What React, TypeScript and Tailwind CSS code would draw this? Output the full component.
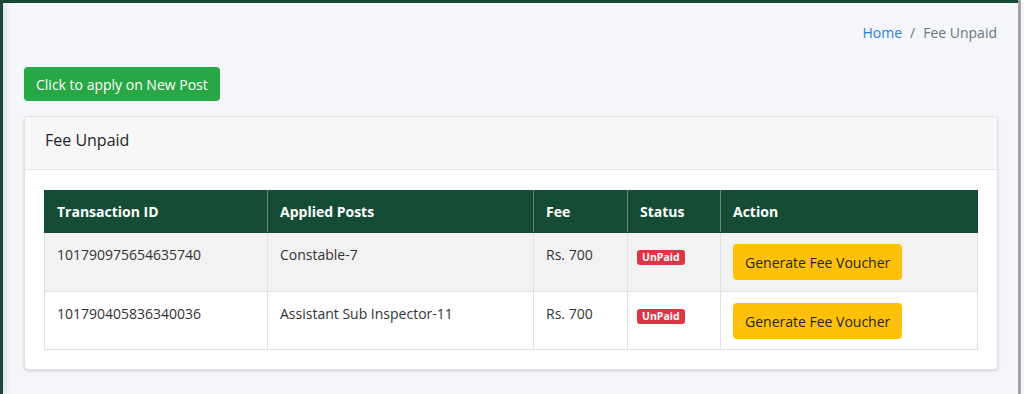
const rows = [
  { id: "101790975654635740", post: "Constable-7", fee: "Rs. 700" },
  { id: "101790405836340036", post: "Assistant Sub Inspector-11", fee: "Rs. 700" },
];

export default function App() {
  return (
    <div className="flex h-[394px] w-[1024px] overflow-hidden bg-[#f4f6f9] font-['Open_Sans',sans-serif] text-[#212529]">
      <div className="w-[3px] shrink-0 bg-[#164a34] shadow-[2px_0_6px_rgba(0,0,0,0.18)] z-10" />

      <div className="flex flex-1 flex-col">
        <div className="h-[3px] bg-[#164a34]" />

        <main className="flex flex-col pl-[21px] pr-5 pt-[19px]">
          <nav className="flex justify-end items-center gap-2 text-[14px] leading-[21px] pr-[1px]">
            <span className="text-[#2d7fd6]">Home</span>
            <span className="text-[#6c757d]">/</span>
            <span className="text-[#6c757d]">Fee Unpaid</span>
          </nav>

          <div className="mt-[24px]">
            <button className="h-[34px] rounded-[4px] bg-[#28a745] px-3 text-[14px] text-white">
              Click to apply on New Post
            </button>
          </div>

          <section className="mt-[15px] rounded-[4px] border border-[#e2e2e2] bg-white shadow-[0_1px_3px_rgba(0,0,0,0.15)]">
            <header className="h-[53px] flex items-start pt-[11px] border-b border-[#e5e5e5] bg-[#f7f7f7] px-5 rounded-t-[4px]">
              <h3 className="text-[16px] leading-[24px] text-[#212529]">Fee Unpaid</h3>
            </header>

            <div className="px-[19px] pt-5 pb-[19px]">
              <table className="w-full border-collapse text-[14px]">
                <thead>
                  <tr className="h-[42px] bg-[#154c35] text-left text-white">
                    <th className="w-[223px] border border-[#154c35] border-r-[#5f8a76] px-3 font-bold">Transaction ID</th>
                    <th className="w-[266px] border border-[#154c35] border-r-[#5f8a76] px-3 font-bold">Applied Posts</th>
                    <th className="w-[94px] border border-[#154c35] border-r-[#5f8a76] px-3 font-bold">Fee</th>
                    <th className="w-[93px] border border-[#154c35] border-r-[#5f8a76] px-3 font-bold">Status</th>
                    <th className="border border-[#154c35] px-3 font-bold">Action</th>
                  </tr>
                </thead>
                <tbody>
                  {rows.map((r, i) => (
                    <tr key={r.id} className={i === 0 ? "h-[59px] bg-[#f2f2f2]" : "h-[58px] bg-white"}>
                      <td className="border border-[#dee2e6] px-3 pt-[11px] align-top text-[#333]">{r.id}</td>
                      <td className="border border-[#dee2e6] px-3 pt-[11px] align-top text-[#333]">{r.post}</td>
                      <td className="border border-[#dee2e6] px-3 pt-[11px] align-top text-[#333]">{r.fee}</td>
                      <td className="border border-[#dee2e6] px-[9px] pt-[12px] align-top">
                        <span className="inline-block rounded-[3px] bg-[#dc3545] px-[5px] text-[10.5px] leading-[15px] font-bold text-white">
                          UnPaid
                        </span>
                      </td>
                      <td className="border border-[#dee2e6] px-3 pt-[11px] pb-[9px] align-top">
                        <button className="h-[36px] rounded-[4px] bg-[#ffc107] px-3 text-[14px] text-[#212529]">
                          Generate Fee Voucher
                        </button>
                      </td>
                    </tr>
                  ))}
                </tbody>
              </table>
            </div>
          </section>
        </main>
      </div>

      <div className="w-[3px] shrink-0 bg-[#a3a3a3]" />
      <div className="w-[3px] shrink-0 bg-[#f4f6f9]" />
    </div>
  );
}
